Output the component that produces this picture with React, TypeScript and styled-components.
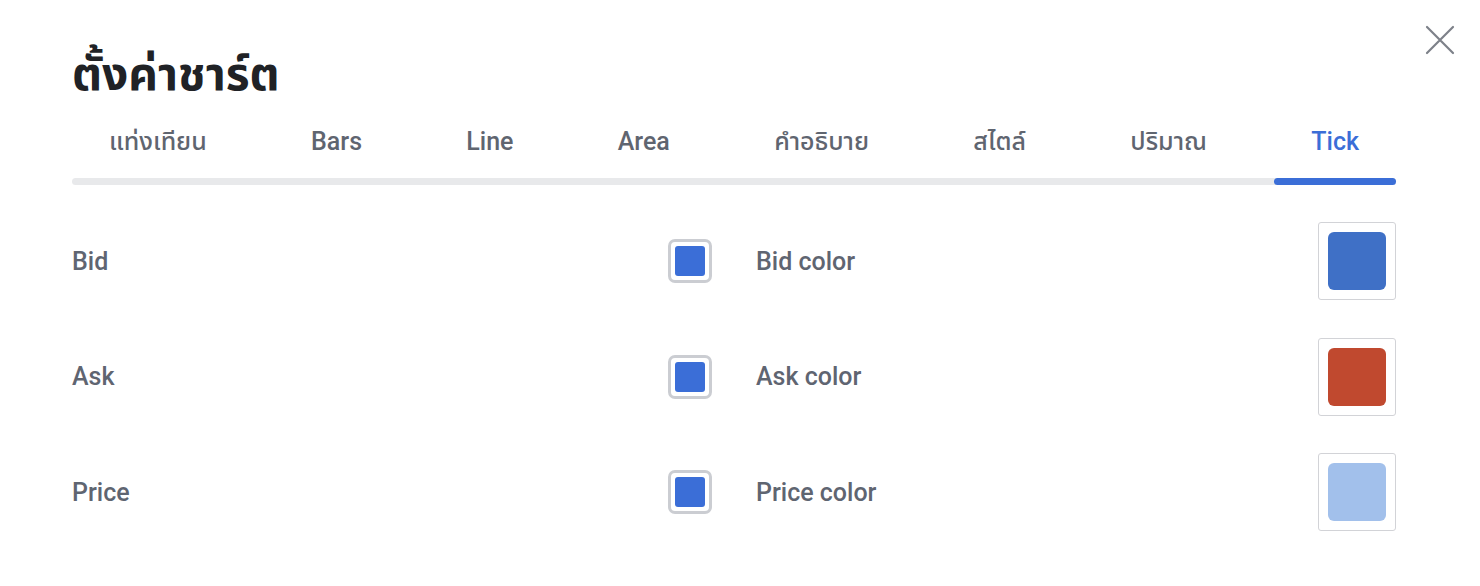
import React, { useState } from "react"
import styled, { createGlobalStyle } from "styled-components"

const GlobalStyle = createGlobalStyle`
  html, body {
    margin: 0;
    padding: 0;
    background: #fff;
  }
  body {
    font-family: Roboto, "Noto Sans", "Noto Sans Thai", sans-serif;
    -webkit-font-smoothing: antialiased;
  }
`

const Dialog = styled.div`
  position: relative;
  width: 1480px;
  height: 586px;
  box-sizing: border-box;
  padding: 44px 84px 0 72px;
  background: #fff;
`

const Title = styled.h1`
  margin: 0;
  height: 60px;
  font-size: 46px;
  font-weight: 700;
  line-height: 60px;
  color: #202226;
`

const CloseButton = styled.button`
  position: absolute;
  top: 22px;
  right: 22px;
  width: 36px;
  height: 36px;
  padding: 0;
  border: none;
  background: none;
  cursor: pointer;
  display: flex;
  align-items: center;
  justify-content: center;
`

const TabBar = styled.div`
  margin-top: 11px;
  display: flex;
  justify-content: space-between;
  position: relative;
  &::after {
    content: "";
    position: absolute;
    left: 0;
    right: 0;
    bottom: 0;
    height: 7px;
    border-radius: 4px;
    background: #e8e9eb;
  }
`

const Tab = styled.button<{ $active?: boolean }>`
  position: relative;
  z-index: 1;
  box-sizing: border-box;
  height: 70px;
  padding: 12px 37px 0;
  border: none;
  background: none;
  font-family: inherit;
  font-size: 25px;
  font-weight: 500;
  line-height: 30px;
  color: ${(p) => (p.$active ? "#3b6ed7" : "#5f6570")};
  cursor: pointer;
  display: flex;
  align-items: flex-start;
  white-space: nowrap;

  &::after {
    content: "";
    position: absolute;
    left: 0;
    right: 0;
    bottom: 0;
    height: 7px;
    border-radius: 4px;
    background: ${(p) => (p.$active ? "#3b6ed7" : "transparent")};
  }
`

const Grid = styled.div`
  margin-top: 37px;
  display: grid;
  grid-template-columns: 1fr 1fr;
  column-gap: 44px;
  row-gap: 37.5px;
`

const Row = styled.div`
  display: flex;
  align-items: center;
  justify-content: space-between;
  height: 78px;
`

const Label = styled.span`
  font-size: 25px;
  font-weight: 500;
  color: #5f6571;
`

const CheckBox = styled.div`
  width: 44px;
  height: 44px;
  box-sizing: border-box;
  border: 3px solid #cbcdd2;
  border-radius: 7px;
  padding: 4px;
  display: flex;
`

const CheckFill = styled.div`
  flex: 1;
  border-radius: 3px;
  background: #3b6ed7;
`

const Swatch = styled.div`
  width: 78px;
  height: 78px;
  box-sizing: border-box;
  border: 1px solid #d2d3d7;
  border-radius: 3px;
  padding: 9px;
  display: flex;
`

const SwatchFill = styled.div<{ $color: string }>`
  flex: 1;
  border-radius: 6px;
  background: ${(p) => p.$color};
`

const tabs = ["แท่งเทียน", "Bars", "Line", "Area", "คำอธิบาย", "สไตล์", "ปริมาณ", "Tick"]

const rows = [
  { name: "Bid", color: "#3f70c6" },
  { name: "Ask", color: "#c0492f" },
  { name: "Price", color: "#a2c0eb" },
]

export default function App() {
  const [active, setActive] = useState("Tick")

  return (
    <>
      <GlobalStyle />
      <Dialog>
        <Title>ตั้งค่าชาร์ต</Title>
        <CloseButton aria-label="close">
          <svg width="30" height="30" viewBox="0 0 30 30">
            <path
              d="M2 2 L28 28 M28 2 L2 28"
              stroke="#7d8189"
              strokeWidth="2.2"
              strokeLinecap="round"
            />
          </svg>
        </CloseButton>
        <TabBar>
          {tabs.map((t) => (
            <Tab key={t} $active={t === active} onClick={() => setActive(t)}>
              {t}
            </Tab>
          ))}
        </TabBar>
        <Grid>
          {rows.map((r) => (
            <React.Fragment key={r.name}>
              <Row>
                <Label>{r.name}</Label>
                <CheckBox>
                  <CheckFill />
                </CheckBox>
              </Row>
              <Row>
                <Label>{r.name} color</Label>
                <Swatch>
                  <SwatchFill $color={r.color} />
                </Swatch>
              </Row>
            </React.Fragment>
          ))}
        </Grid>
      </Dialog>
    </>
  )
}
